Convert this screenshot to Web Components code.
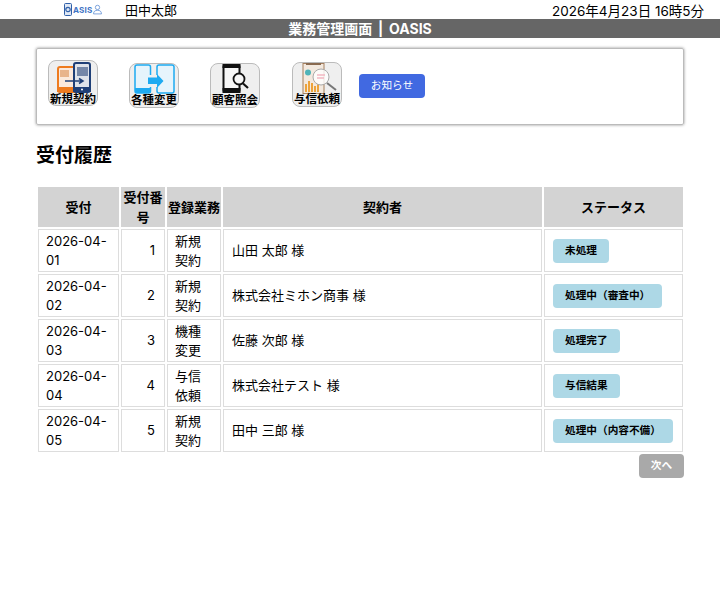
<!DOCTYPE html>
<html lang="ja">
<head>
<meta charset="utf-8">
<title>業務管理画面 | OASIS</title>
<style>
    html, body { margin: 0; background: #fff; }
    body { font-family: Inter, "Noto Sans CJK JP", sans-serif; color: #000; }
</style>
</head>
<body>
<template id="app-header-template">
    <style>
        :host { display: block; }
        .top {
            display: flex;
            align-items: center;
            height: 19px;
            padding: 0 16px 0 64px;
            font-size: 13px;
        }
        .logo { display: flex; align-items: center; width: 61px; height: 14px; color: #3f74c4; }
        .logo b { font-size: 8px; letter-spacing: .2px; margin-left: 1px; }
        .user { flex: 1; }
        .date { font-size: 13.5px; }
        .bar {
            height: 19px;
            line-height: 20px;
            background: #666;
            color: #fff;
            font-size: 14px;
            font-weight: bold;
            text-align: center;
            word-spacing: 2.5px;
        }
    </style>
    <div class="top">
        <div class="logo">
            <svg width="8" height="13" viewBox="0 0 8 13">
                <rect x=".5" y=".5" width="7" height="12" rx="1" fill="#dfe8f5" stroke="#2f5fa8"/>
                <circle cx="4" cy="6.500" r="2.200" fill="none" stroke="#2f5fa8" stroke-width="1.200"/>
            </svg>
            <b>ASIS</b>
            <svg width="9" height="11" viewBox="0 0 10 11" style="margin-left:1px">
                <circle cx="5" cy="3.200" r="2.400" fill="none" stroke="#6f9ad8"/>
                <path d="M.6 10.400c0-3 1.800-4 4.400-4s4.400 1 4.400 4z" fill="none" stroke="#6f9ad8"/>
            </svg>
        </div>
        <div class="user"><slot name="user"></slot></div>
        <div class="date"><slot name="date"></slot></div>
    </div>
    <div class="bar"><slot name="title"></slot></div>
</template>

<template id="menu-card-template">
    <style>
        :host {
            display: flex;
            box-sizing: border-box;
            margin: 10px 36px 0;
            height: 77px;
            padding: 11px 11px 0;
            border: 1px solid #bbb;
            border-radius: 2px;
            box-shadow: 0 0 3px rgba(0,0,0,.45);
        }
        .tiles { display: flex; align-items: flex-start; gap: 31px; }
    </style>
    <div class="tiles"><slot></slot></div>
</template>

<template id="menu-tile-template">
    <style>
        :host {
            display: block;
            box-sizing: border-box;
            position: relative;
            width: 50px;
            height: 45px;
            background: #efefef;
            border: 1px solid #bbb;
            border-radius: 8px;
        }
        .art { display: block; width: 48px; height: 43px; }
        .label {
            position: absolute;
            left: -2px;
            right: -2px;
            bottom: var(--label-bottom, 0);
            text-align: center;
            font-size: 11.500px;
            line-height: 13px;
            font-weight: bold;
            white-space: nowrap;
        }
    </style>
    <div class="art"><slot name="art"></slot></div>
    <div class="label"><slot></slot></div>
</template>

<template id="notice-button-template">
    <style>
        :host {
            display: block;
            width: 66px;
            height: 24px;
            line-height: 24px;
            margin: 14px 0 0 -14px;
            background: #4169e1;
            border-radius: 4px;
            color: #fff;
            font-size: 10.670px;
            text-align: center;
        }
    </style>
    <slot></slot>
</template>

<template id="status-badge-template">
    <style>
        :host {
            display: inline-block;
            height: 24px;
            line-height: 24px;
            padding: 0 12px;
            background: #add8e6;
            border-radius: 4px;
            font-size: 10.670px;
            font-weight: bold;
            white-space: nowrap;
            vertical-align: middle;
        }
    </style>
    <slot></slot>
</template>

<template id="history-table-template">
    <style>
        :host { display: block; margin: 0 36px; }
        h2 { margin: 0; padding-top: 19px; height: 41px; font-size: 19px; line-height: 23px; }
        table {
            width: 648px;
            border-collapse: separate;
            border-spacing: 2px;
            table-layout: fixed;
            font-size: 13px;
            line-height: 19px;
        }
        th {
            background: #d3d3d3;
            height: 40px;
            padding: 0;
            font-size: 13px;
            line-height: 20px;
        }
        td {
            box-sizing: border-box;
            height: 43px;
            padding: 1px 8px 1px 7px;
            border: 1px solid #ddd;
        }
        td.num { text-align: right; padding-right: 9px; }
        td.wide { padding-left: 8px; }
        .next { display: flex; justify-content: flex-end; }
        .next span {
            width: 45px;
            height: 24px;
            line-height: 24px;
            background: #a9a9a9;
            border-radius: 4px;
            color: #fff;
            font-size: 10.670px;
            font-weight: bold;
            text-align: center;
        }
    </style>
    <h2>受付履歴</h2>
    <table>
        <colgroup>
            <col style="width:81px"><col style="width:44px"><col style="width:54px"><col style="width:319px"><col style="width:139px">
        </colgroup>
        <thead>
            <tr><th>受付</th><th>受付番号</th><th>登録業務</th><th>契約者</th><th>ステータス</th></tr>
        </thead>
        <tbody></tbody>
    </table>
    <div class="next"><span>次へ</span></div>
</template>

<app-header>
    <span slot="user">田中太郎</span>
    <span slot="date">2026年4月23日 16時5分</span>
    <span slot="title">業務管理画面 | OASIS</span>
</app-header>

<menu-card>
    <menu-tile style="height:46px; --label-bottom:-1px">
        <svg slot="art" width="48" height="44" viewBox="0 0 48 44">
            <rect x="9" y="6" width="20" height="25" rx="2" fill="#fbe9dc" stroke="#ee7b1f" stroke-width="2"/>
            <rect x="8" y="26" width="22" height="5" fill="#ee7b1f"/>
            <rect x="11" y="9" width="9" height="7" fill="#e8b48c"/>
            <rect x="25" y="2" width="16" height="29" rx="2" fill="#dfe3ea" stroke="#1f3f77" stroke-width="2"/>
            <rect x="24" y="26" width="18" height="5" fill="#1f3f77"/>
            <rect x="28" y="6" width="11" height="9" fill="#7587a8"/>
            <circle cx="33" cy="28.500" r="1" fill="#fff"/>
            <path d="M16 20h18M30 17.500l4 2.500-4 2.500" fill="none" stroke="#1f3f77" stroke-width="1.500"/>
        </svg>
        新規契約
    </menu-tile>
    <menu-tile style="margin-top:3px">
        <svg slot="art" width="48" height="44" viewBox="0 0 48 44">
            <path d="M20.500 11V3a2 2 0 0 0-2-2H7a2 2 0 0 0-2 2v24a2 2 0 0 0 2 2h11.500a2 2 0 0 0 2-2v-4" fill="#e6f4fc" stroke="#1eaaf1" stroke-width="1.500"/>
            <rect x="5" y="24" width="15.500" height="5" fill="#1eaaf1"/>
            <path d="M27 11V3a2 2 0 0 1 2-2h13a2 2 0 0 1 2 2v24a2 2 0 0 1-2 2H29a2 2 0 0 1-2-2v-4" fill="#e6f4fc" stroke="#1eaaf1" stroke-width="1.500"/>
            <path d="M18 13.500h9V10l6.500 7-6.500 7v-4h-9z" fill="#1eaaf1"/>
        </svg>
        各種変更
    </menu-tile>
    <menu-tile style="margin-top:3px">
        <svg slot="art" width="48" height="44" viewBox="0 0 48 44">
            <rect x="12.500" y="1" width="16" height="27" rx="2" fill="#f6f6f6" stroke="#111" stroke-width="2"/>
            <rect x="11.500" y="0" width="18" height="4" fill="#111"/>
            <rect x="11.500" y="24" width="18" height="5" fill="#111"/>
            <circle cx="28" cy="15" r="5.500" fill="#f6f6f6" stroke="#111" stroke-width="1.800"/>
            <path d="M32 19.500l5 4.500" stroke="#111" stroke-width="2.200"/>
        </svg>
        顧客照会
    </menu-tile>
    <menu-tile style="margin:2px 0 0 1px">
        <svg slot="art" width="48" height="44" viewBox="0 0 48 44">
            <rect x="10" y="0.500" width="21" height="30" fill="#f3e9df" stroke="#a5805f" stroke-width="1"/>
            <rect x="13" y="0" width="15" height="2" fill="#8a6a4f"/>
            <circle cx="15" cy="9.500" r="3" fill="#4fb3b8"/>
            <path d="M12 29v-8h2v8zM15 29V18h2v11zM18 29V20h2v9zM21 29v-6h2v6zM24 29V21h2v8z" fill="#eda33b"/>
            <circle cx="28" cy="14" r="8" fill="#fff" fill-opacity=".8" stroke="#aaa" stroke-width="1"/>
            <path d="M24 12h8M24 15h7" stroke="#f2b8c2" stroke-width="1.500"/>
            <path d="M34 20l9 7" stroke="#777" stroke-width="2"/>
        </svg>
        与信依頼
    </menu-tile>
    <notice-button>お知らせ</notice-button>
</menu-card>

<history-table></history-table>

<script>
    const rows = [
        ['2026-04-01', 1, '新規契約', '山田 太郎 様', '未処理'],
        ['2026-04-02', 2, '新規契約', '株式会社ミホン商事 様', '処理中（審査中）'],
        ['2026-04-03', 3, '機種変更', '佐藤 次郎 様', '処理完了'],
        ['2026-04-04', 4, '与信依頼', '株式会社テスト 様', '与信結果'],
        ['2026-04-05', 5, '新規契約', '田中 三郎 様', '処理中（内容不備）']
    ];

    class TemplateElement extends HTMLElement {
        constructor() {
            super();
            const template = document.querySelector('#' + this.localName + '-template');
            this.attachShadow({mode: 'open'});
            this.shadowRoot.appendChild(template.content.cloneNode(true));
        }
    }

    class HistoryTable extends TemplateElement {
        connectedCallback() {
            const body = this.shadowRoot.querySelector('tbody');
            rows.forEach(r => {
                const tr = document.createElement('tr');
                tr.innerHTML = `<td>${r[0]}</td><td class="num">${r[1]}</td><td>${r[2]}</td>` +
                    `<td class="wide">${r[3]}</td><td class="wide"><status-badge>${r[4]}</status-badge></td>`;
                body.appendChild(tr);
            });
        }
    }

    customElements.define('app-header', class extends TemplateElement {});
    customElements.define('menu-card', class extends TemplateElement {});
    customElements.define('menu-tile', class extends TemplateElement {});
    customElements.define('notice-button', class extends TemplateElement {});
    customElements.define('status-badge', class extends TemplateElement {});
    customElements.define('history-table', HistoryTable);
</script>
</body>
</html>
